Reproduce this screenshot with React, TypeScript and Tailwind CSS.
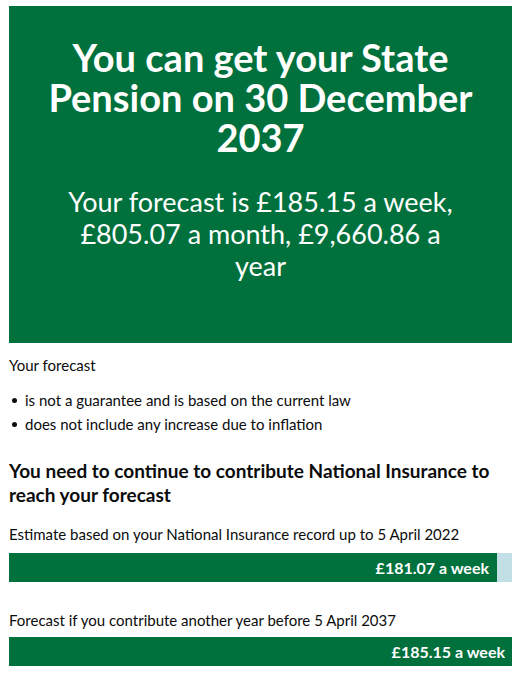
import React from "react";

export default function App() {
  return (
    <div className="w-[521px] h-[687px] bg-white text-[#0b0c0c] overflow-hidden" style={{ fontFamily: "Lato, 'Noto Sans', Arial, sans-serif" }}>
      <div className="pt-[6px] px-[9px]">
        <div className="bg-[#00703c] h-[337px] flex flex-col items-center text-center text-white pt-[31px]">
          <h1 className="text-[38px] leading-[40px] font-bold w-[440px]">
            You can get your State Pension on 30 December 2037
          </h1>
          <p className="mt-[29px] text-[27px] leading-[32px] w-[400px]">
            Your forecast is £185.15 a week, £805.07 a month, £9,660.86 a year
          </p>
        </div>
        <p className="mt-[12px] text-[15px] leading-[20px]">Your forecast</p>
        <ul className="mt-[13px] text-[15px] leading-[24px]">
          <li className="flex items-center gap-[8px]">
            <span className="ml-[3px] w-[5px] h-[5px] rounded-full bg-[#0b0c0c]" />
            is not a guarantee and is based on the current law
          </li>
          <li className="flex items-center gap-[8px]">
            <span className="ml-[3px] w-[5px] h-[5px] rounded-full bg-[#0b0c0c]" />
            does not include any increase due to inflation
          </li>
        </ul>
        <h2 className="mt-[23px] text-[19px] leading-[24px] font-bold">
          You need to continue to contribute National Insurance to reach your forecast
        </h2>
        <p className="mt-[17px] text-[15px] leading-[20px]">
          Estimate based on your National Insurance record up to 5 April 2022
        </p>
        <div className="mt-[9px] flex h-[29px]">
          <div className="bg-[#00703c] w-[488px] flex items-center justify-end pr-[8px] text-white font-bold text-[16px]">
            £181.07 a week
          </div>
          <div className="flex-1 bg-[#c1dfe4]" />
        </div>
        <p className="mt-[28px] text-[15px] leading-[20px]">
          Forecast if you contribute another year before 5 April 2037
        </p>
        <div className="mt-[7px] flex h-[29px]">
          <div className="bg-[#00703c] flex-1 flex items-center justify-end pr-[7px] text-white font-bold text-[16px]">
            £185.15 a week
          </div>
        </div>
      </div>
    </div>
  );
}
